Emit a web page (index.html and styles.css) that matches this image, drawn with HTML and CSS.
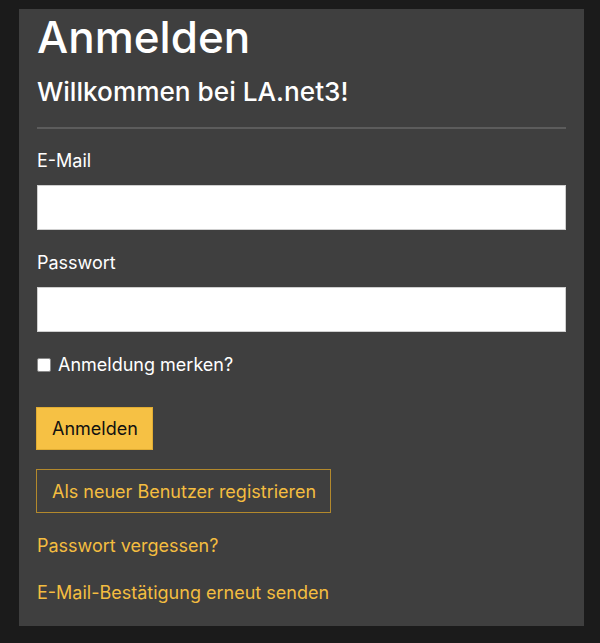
FILE: index.html
```html
<!DOCTYPE html>
<html lang="de">
<head>
<meta charset="utf-8">
<title>Anmelden</title>
<link rel="stylesheet" href="styles.css">
</head>
<body>
<main class="panel">
  <h1 class="title">Anmelden</h1>
  <h2 class="subtitle">Willkommen bei LA.net3!</h2>
  <hr class="rule">
  <form class="form">
    <div class="field">
      <label class="label" for="email">E-Mail</label>
      <input class="input" id="email" type="email">
    </div>
    <div class="field">
      <label class="label" for="pw">Passwort</label>
      <input class="input" id="pw" type="password">
    </div>
    <label class="check"><span class="box"></span>Anmeldung merken?</label>
    <div class="actions">
      <button class="btn btn-primary" type="button">Anmelden</button>
    </div>
    <div class="actions">
      <button class="btn btn-outline" type="button">Als neuer Benutzer registrieren</button>
    </div>
  </form>
  <p class="link-row"><a class="link" href="#">Passwort vergessen?</a></p>
  <p class="link-row"><a class="link" href="#">E-Mail-Bestätigung erneut senden</a></p>
</main>
</body>
</html>
```
FILE: styles.css
```css
html, body {
  margin: 0;
  padding: 0;
}
body {
  background: #1b1b1b;
  font-family: Inter, "Liberation Sans", sans-serif;
  color: #ffffff;
  height: 643px;
  overflow: hidden;
}
.panel {
  box-sizing: border-box;
  width: 565px;
  height: 617px;
  margin: 9px 0 0 19px;
  background: #3f3f3f;
  padding: 6px 18px 0 18px;
  display: flex;
  flex-direction: column;
}
.title {
  margin: 0;
  font-size: 44px;
  line-height: 44px;
  font-weight: 500;
}
.subtitle {
  margin: 17px 0 0;
  font-size: 26.2px;
  line-height: 32px;
  font-weight: 500;
}
.rule {
  margin: 19px 0 0;
  border: 0;
  border-top: 2px solid #5c5c5c;
  height: 0;
}
.form {
  display: flex;
  flex-direction: column;
  margin-top: 20px;
}
.field {
  display: flex;
  flex-direction: column;
  margin-bottom: 21px;
}
.label {
  font-size: 18px;
  line-height: 24px;
  margin-bottom: 12px;
}
.input {
  box-sizing: border-box;
  height: 45px;
  width: 100%;
  border: 1px solid #cfcfcf;
  background: #ffffff;
  margin: 0;
}
.check {
  display: flex;
  align-items: center;
  font-size: 18px;
  line-height: 24px;
}
.box {
  box-sizing: border-box;
  width: 14px;
  height: 14px;
  background: #fff;
  border: 1px solid #8a8a8a;
  border-radius: 2px;
  margin-right: 7px;
}
.actions {
  display: flex;
  margin-top: 30px;
  margin-left: -1px;
}
.actions + .actions {
  margin-top: 19px;
}
.btn {
  box-sizing: border-box;
  height: 44px;
  padding: 0 14px 0 15px;
  font-family: inherit;
  font-size: 18px;
  border-radius: 0;
  cursor: pointer;
}
.btn-primary {
  height: 43px;
  background: #f6c144;
  border: 1px solid #e0ac33;
  color: #111;
}
.btn-outline {
  background: transparent;
  border: 1px solid #b3892c;
  color: #f4bd40;
}
.link-row {
  margin: 21px 0 0;
  font-size: 18px;
  line-height: 24px;
}
.link-row + .link-row {
  margin-top: 23px;
}
.link {
  color: #f4bd40;
  text-decoration: none;
}
```
